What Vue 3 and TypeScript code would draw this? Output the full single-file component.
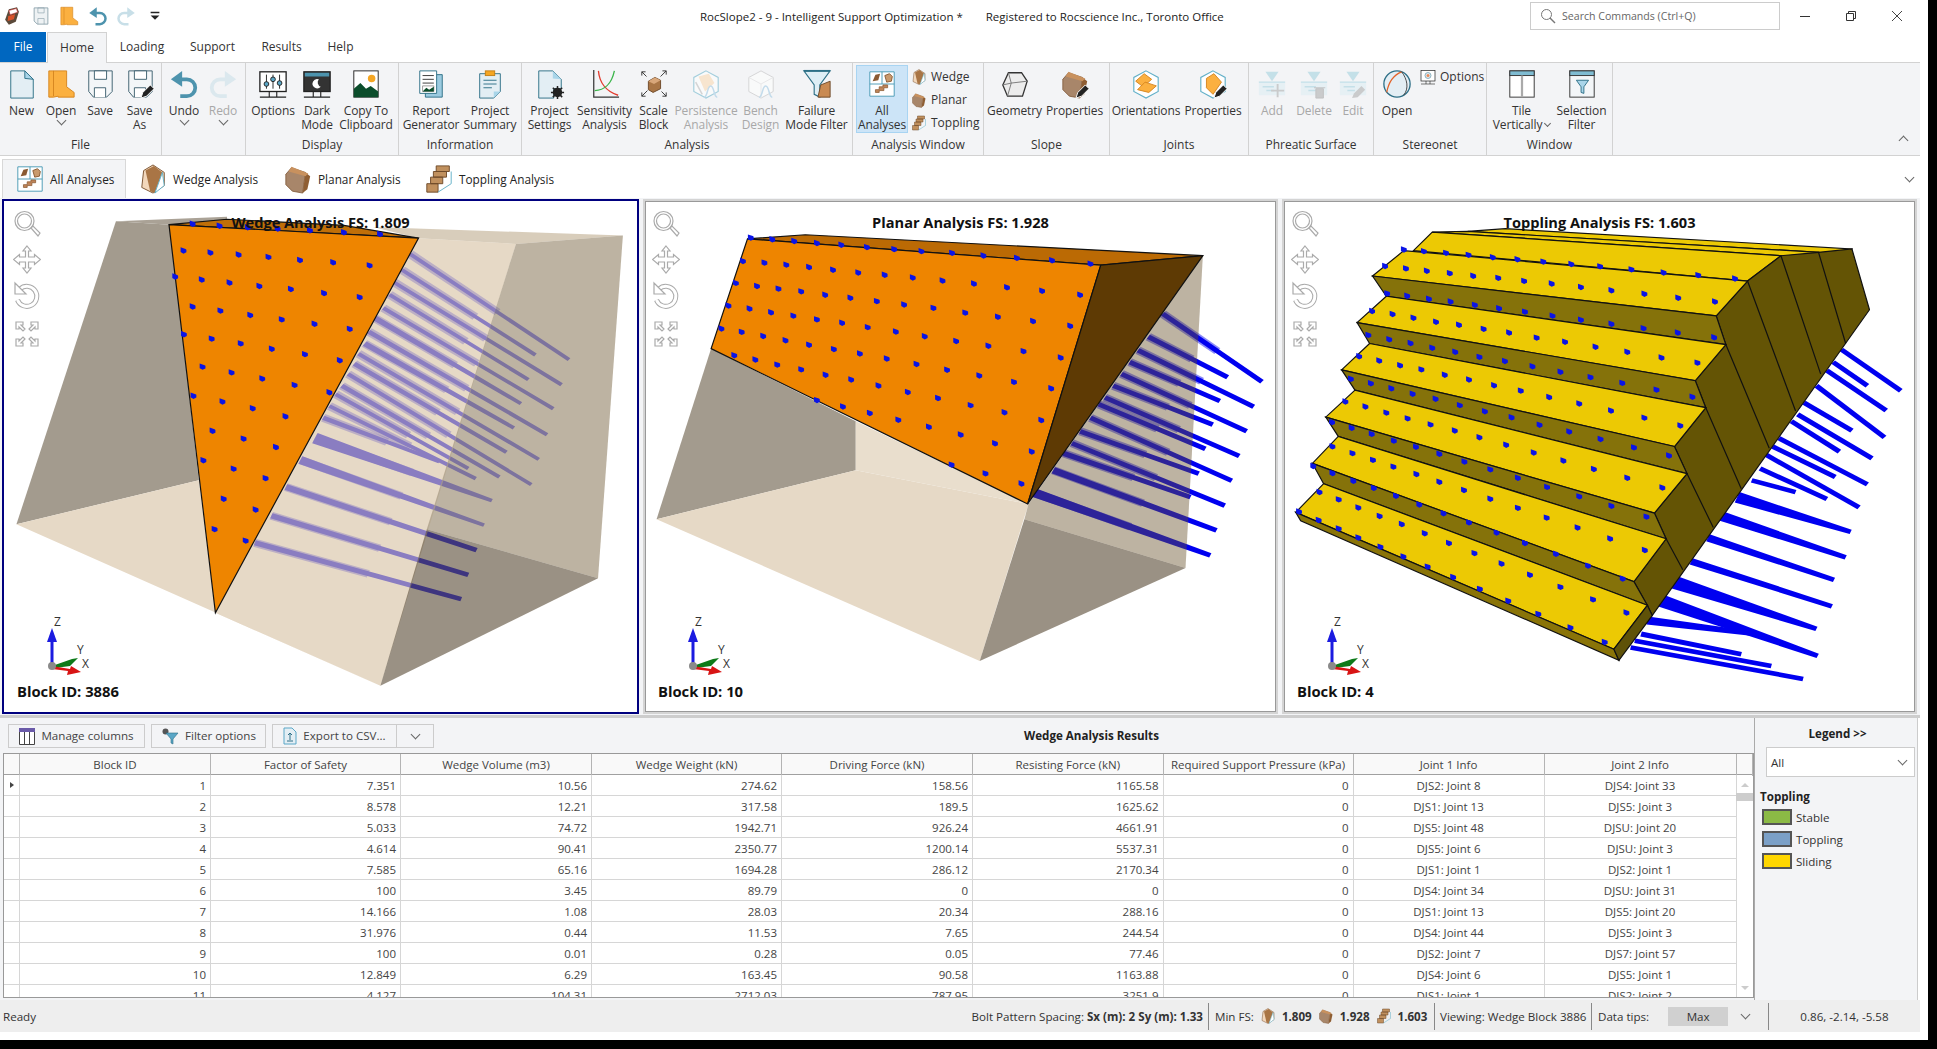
<script setup lang="ts">
// 3D views are drawn in the coordinates of the zoomed reference and stretched by the viewBox
type Face = { pts: string; fill: string; op?: number; edge?: boolean }
type Scene = {
  title: string
  block: string
  active?: boolean
  viewBox: string
  back: Face[]
  bolts: number[][]
  groutOp?: number
  front: Face[]
  lines?: string
  heads: string[]
}

function taper([x1, y1, x2, y2, w1, w2]: number[]) {
  const len = Math.hypot(x2 - x1, y2 - y1)
  const nx = -(y2 - y1) / len
  const ny = (x2 - x1) / len
  const end = w2 * 1.5
  const start = Math.max(w1 * 1.1, end)
  return [
    [x1 + (nx * start) / 2, y1 + (ny * start) / 2],
    [x2 + (nx * end) / 2, y2 + (ny * end) / 2],
    [x2 - (nx * end) / 2, y2 - (ny * end) / 2],
    [x1 - (nx * start) / 2, y1 - (ny * start) / 2],
  ]
    .map((p) => p.map((v) => v.toFixed(1)).join(","))
    .join(" ")
}

// wider grouted part along the first half of a bolt
function grout([x1, y1, x2, y2]: number[]) {
  return taper([x1, y1, x1 + (x2 - x1) * 0.55, y1 + (y2 - y1) * 0.55, 22, 15])
}

function headPath(rows: string[]) {
  return rows
    .join(" ")
    .trim()
    .split(/\s+/)
    .map((p) => {
      const [x, y] = p.split(",").map(Number)
      return `M${x - 7} ${y - 10}l12 5 2 2 0 8-7 4-7-5z`
    })
    .join("")
}

const wedge: Scene = {
  title: "Wedge Analysis FS: 1.809",
  block: "Block ID: 3886",
  active: true,
  viewBox: "10 18 1527 1513",
  groutOp: 0.45,
  back: [
    { pts: "280,78 548,65 548,85 410,88", fill: "#aaa296" },
    { pts: "280,78 410,88 480,845 40,975", fill: "#a39b8e" },
    { pts: "40,975 480,845 520,1237 918,1453", fill: "#e6d9c6" },
  ],
  bolts: [
    [990, 175, 1373, 488, 8, 7], [970, 222, 1292, 474, 8, 7], [950, 258, 1355, 562, 8, 7],
    [940, 295, 1275, 547, 9, 7], [925, 335, 1335, 633, 10, 7], [905, 365, 1257, 618, 14, 7],
    [890, 405, 1320, 710, 12, 7], [880, 440, 1240, 690, 14, 7], [865, 470, 1300, 783, 10, 7],
    [855, 500, 1222, 762, 12, 7], [840, 530, 1282, 858, 10, 7], [825, 565, 1205, 835, 12, 7],
    [810, 590, 1130, 810, 10, 7], [795, 625, 1148, 840, 10, 7], [780, 660, 1060, 790, 12, 7],
    [760, 720, 1187, 905, 30, 7], [725, 785, 1168, 978, 22, 7], [690, 865, 1150, 1052, 16, 9],
    [655, 950, 1130, 1125, 14, 9], [615, 1030, 1113, 1197, 14, 9],
  ],
  front: [
    { pts: "900,95 1503,120 1245,145 1010,128", fill: "rgb(194,177,148)", op: 0.64 },
    { pts: "1010,128 1245,145 918,1453 520,1237", fill: "rgb(216,196,166)", op: 0.64 },
    { pts: "1245,145 1503,120 1443,1135 1030,990", fill: "rgb(167,153,131)", op: 0.75 },
    { pts: "1030,990 1443,1135 918,1453", fill: "rgb(97,83,62)", op: 0.64 },
    { pts: "408,88 548,72 830,90 1010,128", fill: "#c06f08", edge: true },
    { pts: "408,88 1010,128 520,1237", fill: "#ee8500", edge: true },
  ],
  heads: [
    "465,86 530,92 598,96 670,100 748,105 830,111 917,116",
    "443,165 508,171 576,177 648,184 724,193 804,200 892,209",
    "423,242 487,251 554,260 626,270 702,279 782,291 868,303",
    "465,331 532,343 604,356 680,369 759,382 844,397",
    "444,413 511,426 581,440 656,456 736,472 820,490",
    "489,509 559,526 633,544 711,563 795,585",
    "467,595 537,612 610,632 689,656",
    "513,699 588,722 666,747",
    "491,786 564,811 641,839",
    "540,900 617,932",
    "518,990 593,1024",
  ],
}

const planar: Scene = {
  title: "Planar Analysis FS: 1.928",
  block: "Block ID: 10",
  viewBox: "12 18 1527 1513",
  groutOp: 0.45,
  back: [
    { pts: "172,455 522,670 522,815 40,960", fill: "#a39b8e" },
    { pts: "40,960 522,815 940,915 822,1380", fill: "#e6d9c6" },
    { pts: "522,670 940,915 522,815", fill: "#e9decd" },
    { pts: "930,960 1320,1105 822,1380", fill: "#9a9184" },
  ],
  bolts: [
    [1265, 352, 1505, 553, 9, 9], [1230, 420, 1422, 540, 9, 9], [1205, 460, 1485, 627, 9, 9],
    [1185, 495, 1403, 610, 9, 9], [1165, 530, 1468, 700, 10, 9], [1145, 565, 1386, 680, 10, 9],
    [1125, 600, 1450, 773, 10, 9], [1110, 620, 1368, 752, 10, 9], [1090, 660, 1432, 846, 10, 9],
    [1065, 700, 1352, 825, 12, 9], [1045, 735, 1415, 920, 12, 9], [1025, 765, 1332, 895, 14, 9],
    [1000, 815, 1395, 993, 18, 9], [950, 880, 1380, 1067, 24, 9],
  ],
  front: [
    { pts: "940,915 1362,180 1320,1105 930,960", fill: "rgb(103,80,41)", op: 0.435 },
    { pts: "260,130 400,118 1362,180 1115,208", fill: "#bb6a04", edge: true },
    { pts: "260,130 1115,208 938,915 172,455", fill: "#ee8500", edge: true },
    { pts: "1115,208 1362,180 938,915", fill: "#5e3a04", edge: true },
  ],
  heads: [
    "268,127 320,132 373,137 428,143 487,148 549,155 615,161 681,167 755,172 831,180 912,187 997,194 1090,204",
    "249,196 301,201 354,207 409,214 467,222 528,230 592,237 660,245 732,254 808,263 888,274 973,284 1065,296",
    "232,261 283,270 335,278 390,286 448,296 509,305 573,315 639,325 710,335 787,349 866,361 951,374 1041,388",
    "214,328 265,337 317,348 371,358 428,369 489,379 551,392 619,405 689,419 765,433 843,447 928,463 1018,482",
    "197,396 246,406 298,418 352,431 409,444 469,457 532,470 597,485 669,501 743,518 821,535 905,554 995,573",
    "228,475 279,488 332,503 390,517 449,533 511,547 577,565 648,584 721,602 800,623 882,644 971,667",
    "428,608 491,627 556,646 625,666 699,687 776,710 859,736 948,760",
    "754,799 836,825 923,855",
  ],
}

const topY = "#ecc904"
const riser = "#85720a"
const toppling: Scene = {
  title: "Toppling Analysis FS: 1.603",
  block: "Block ID: 4",
  viewBox: "10 18 1511 1513",
  back: [],
  bolts: [
    [1345, 458, 1487, 580, 9, 9], [1325, 495, 1407, 565, 9, 9], [1310, 520, 1452, 638, 9, 9],
    [1285, 565, 1448, 718, 10, 9], [1255, 615, 1370, 698, 10, 9], [1240, 650, 1418, 780, 12, 9],
    [1225, 670, 1340, 760, 10, 9], [1195, 720, 1407, 857, 10, 9], [1180, 745, 1330, 835, 10, 9],
    [1165, 770, 1387, 925, 12, 9], [1150, 810, 1310, 900, 10, 9], [1130, 845, 1235, 880, 10, 9],
    [1095, 895, 1367, 998, 30, 9], [1055, 950, 1355, 1073, 26, 9], [1025, 1015, 1327, 1140, 20, 9],
    [985, 1085, 1322, 1218, 18, 9], [940, 1145, 1285, 1285, 36, 9], [910, 1200, 1288, 1365, 34, 9],
    [880, 1260, 1140, 1300, 22, 9], [865, 1300, 1105, 1360, 14, 9], [850, 1320, 1177, 1395, 10, 9],
    [840, 1340, 1253, 1433, 10, 9],
  ],
  front: [
    { pts: "540,100 1370,160 1305,250 1290,170 450,108", fill: topY, edge: true },
    { pts: "450,108 1290,170 1225,265 1200,180 365,110", fill: topY, edge: true },
    { pts: "320,165 365,110 1200,180 1120,255", fill: topY, edge: true },
    {
      pts: "1045,358 1120,255 1200,180 1290,170 1370,160 1412,340 892,1245 880,1215 848,1145 925,1018 897,942 975,825 945,745 1020,630 995,550 1068,443",
      fill: "#645405",
      edge: true,
    },
    { pts: "222,240 297,165 1120,255 1045,358", fill: topY, edge: true },
    { pts: "222,240 1045,358 1068,443 255,300", fill: riser, edge: true },
    { pts: "255,300 185,378 995,550 1068,443", fill: topY, edge: true },
    { pts: "185,378 995,550 1020,630 215,440", fill: riser, edge: true },
    { pts: "215,440 148,518 945,745 1020,630", fill: topY, edge: true },
    { pts: "148,518 945,745 975,825 180,578", fill: riser, edge: true },
    { pts: "180,578 110,658 897,942 975,825", fill: topY, edge: true },
    { pts: "110,658 897,942 925,1018 140,715", fill: riser, edge: true },
    { pts: "140,715 78,795 848,1145 925,1018", fill: topY, edge: true },
    { pts: "78,795 848,1145 880,1215 105,855", fill: riser, edge: true },
    { pts: "105,855 38,940 800,1345 880,1215", fill: topY, edge: true },
    { pts: "38,940 800,1345 812,1378 50,965", fill: "#8a7408", edge: true },
    { pts: "800,1345 880,1215 892,1245 812,1378", fill: "#5f5208", edge: true },
  ],
  lines:
    "M1200 180L1295 530M1290 170L1355 440M1120 255L1235 640M1068 443L1172 750M1020 630L1105 870M975 825L1038 985M925 1018L965 1110",
  heads: [
    "297,162 345,167 398,172 452,178 510,185 569,191 631,198 698,205 767,212 842,221 919,230 1002,238 1090,248",
    "252,211 302,218 352,225 407,232 463,240 523,246 585,255 651,263 721,273 794,283 873,293 954,305 1042,316",
    "257,292 305,299 357,308 409,316 467,326 525,336 587,346 653,358 721,370 794,382 871,395 953,408 1040,422",
    "221,344 270,353 320,364 374,376 429,385 488,397 549,408 615,423 683,435 756,450 832,465 914,482 1000,497",
    "212,415 262,428 313,439 365,453 420,465 478,480 539,492 605,508 672,524 744,540 820,557 902,577 988,598",
    "190,478 238,491 288,505 339,517 395,533 453,547 513,564 577,580 645,599 717,618 793,639 873,660 959,683",
    "170,545 218,558 267,573 318,589 373,604 431,623 491,641 555,659 622,681 693,701 768,723 848,748 932,772",
    "157,612 205,627 255,645 306,662 361,680 419,698 478,718 542,740 608,763 679,787 752,812 832,838 916,867",
    "125,673 172,690 220,708 273,728 326,746 382,767 442,790 504,813 570,838 640,865 717,893 794,921 878,953",
    "126,745 174,765 223,785 272,805 327,827 382,850 441,874 504,900 570,927 639,956 713,985 791,1018 874,1052",
    "80,803 126,824 176,847 225,868 278,891 334,917 392,943 453,970 519,1000 587,1031 661,1063 738,1098 821,1136",
    "95,880 141,902 188,926 239,951 292,975 347,1002 405,1031 466,1061 531,1092 599,1125 672,1161 750,1198 830,1237",
    "46,938 93,963 141,988 188,1015 241,1042 296,1071 354,1101 415,1132 479,1167 547,1202 619,1241 696,1281 778,1324",
  ],
}

const scenes = [wedge, planar, toppling]

const pencil = `<path d="M17 31l2-6 8-8 4 4-8 8z" fill="#222" stroke="#fff"/>`
const floppy = (extra = "") =>
  `<path d="M4 2h25v22l-6 6H9l-5-6z" fill="#f3f6f8" stroke="#3c5f6e"/><path d="M10 2h13v9H10zM10 30V20h12v10" fill="#fff" stroke="#3c5f6e"/>${extra}`
const monitor = (inner: string, fill = "#fff") =>
  `<rect x="2" y="3" width="28" height="21" fill="${fill}" stroke="#222" stroke-width="1.4"/>${inner}<path d="M12 24v6M20 24v6M2 30h28" stroke="#222" stroke-width="1.2"/>`
const brownBlock = `<path d="M3 11l6-7 15 5-3 22-11-2-7-7z" fill="#a8866a" stroke="#7a5230" stroke-width=".8"/><path d="M24 9l5 4-3 14-5 4z" fill="#8f5e33"/><path d="M9 3l18 7-3 3L6 8z" fill="#c8915e"/>`
const hex = `<path d="M16 2l13 7v15l-13 7-13-7V9z" fill="#fff" stroke="#62b0c8" stroke-width="1.2"/>`
const phreatic = (extra: string) =>
  `<path d="M9 3h14l-7 10z" fill="#9fd0de"/><path d="M2 14h28v14H2z" fill="#dcedf4"/><path d="M2 14h28M6 19h12M10 23h8" stroke="#9fd0de" stroke-width="1.5"/>${extra}`
const miniBlocks = `<path d="M3 3h26v26H3zM3 16h26M16 3v13" fill="#fff" stroke="#4a9ab5"/><path d="M6 13l3-7 5-1-2 7z" fill="#8a5a32"/><path d="M19 7l5-2 3 3-1 5-5 1z" fill="#c99a6d" stroke="#8a5a32"/><path d="M9 25v-3h4v-3h4v-2h5v3h-4v3h-5v2z" fill="#c0855a" stroke="#8a5a32" stroke-width=".8"/>`

const icons: Record<string, string> = {
  new: `<path d="M4 2h15l9 9v20H4z" fill="#e3eef4" stroke="#2d6f86"/><path d="M19 2l9 9-9-1z" fill="#a9d5e9" stroke="#2d6f86"/>`,
  open: `<path d="M3 2h19v17l8 6v5H13v-1l-5 1H3z" fill="#fbb040" stroke="#d5851f"/><path d="M8 2v27" stroke="#d5851f"/>`,
  save: floppy(),
  saveas: floppy(pencil),
  undo: `<path d="M10 11h9a9 9 0 0 1 0 18h-7" fill="none" stroke="#4d93ad" stroke-width="4"/><path d="M2 11l12-9v17z" fill="#4d93ad"/>`,
  redo: `<path d="M22 11h-9a9 9 0 0 0 0 18h7" fill="none" stroke="#c8dfe8" stroke-width="4"/><path d="M30 11L18 2v17z" fill="#c8dfe8"/>`,
  options: monitor(
    `<path d="M9 6v15M16 6v15M23 6v15" stroke="#222"/><circle cx="9" cy="16" r="2.5" fill="#5aa7c7" stroke="#222"/><circle cx="16" cy="11" r="2.5" fill="#5aa7c7" stroke="#222"/><circle cx="23" cy="15" r="2.5" fill="#5aa7c7" stroke="#222"/>`,
  ),
  dark: monitor(
    `<rect x="3" y="4" width="26" height="4" fill="#4d93ad"/><path d="M18 11a5 5 0 1 0 2 8 5 5 0 0 1-2-8z" fill="#fff"/>`,
    "#333",
  ),
  copy: `<rect x="3" y="2" width="26" height="28" fill="#fff" stroke="#222"/><circle cx="22" cy="10" r="4" fill="#f5a623"/><path d="M3 30V21l7-6 6 6 5-3 8 6v6z" fill="#0b4d2b"/>`,
  report: `<path d="M10 6h18v24H10z" fill="#9ccbe0" stroke="#2d6f86"/><path d="M4 2h18v24H4z" fill="#fff" stroke="#2d6f86"/><path d="M7 7h12M7 11h12M7 15h12" stroke="#333"/><path d="M7 18h12v6H7z" fill="#fff" stroke="#999"/><path d="M7 24l4-4 3 2 5-3v5z" fill="#0b4d2b"/>`,
  summary: `<path d="M5 5h22v19l-7 7H5z" fill="#e3eef4" stroke="#2d6f86"/><path d="M20 31v-7h7z" fill="#a9d5e9"/><rect x="11" y="2" width="10" height="5" fill="#f5a623" stroke="#c47f18"/><path d="M9 12h14M9 16h14M9 20h9" stroke="#2d6f86"/>`,
  settings: `<path d="M4 2h15l9 9v10H20v10H4z" fill="#e3eef4" stroke="#2d6f86"/><path d="M19 2l9 9-9-1z" fill="#a9d5e9"/><circle cx="24" cy="25" r="5" fill="#222"/><circle cx="24" cy="25" r="1.8" fill="#fff"/><path d="M24 18v14M17 25h14M19 20l10 10M29 20l-10 10" stroke="#222" stroke-width="1.6"/>`,
  sensitivity: `<path d="M4 1v29h27" fill="none" stroke="#333" stroke-width="1.3"/><path d="M9 2c1 12 8 22 21 26" fill="none" stroke="#e23b2e" stroke-width="1.4"/><path d="M5 23c10 0 18-7 21-21" fill="none" stroke="#3ab54a" stroke-width="1.4"/>`,
  scale: `<path d="M10 13l7-4 6 3v9l-8 4-5-3z" fill="#a97545" stroke="#6e4a2a"/><path d="M10 13l7-4 6 3-7 4z" fill="#d9a77a"/><path d="M3 3l5 5M3 3h4M3 3v4M29 29l-5-5M29 29h-4M29 29v-4M23 8l6-6M29 2h-4M29 2v4M3 29l6-6M3 29h4M3 29v-4" stroke="#333" fill="none"/>`,
  persist: `${hex}<path d="M8 8l11-3 6 10-10 9z" fill="#fbd9b0"/><path d="M14 30c4 0 3-12 7-12s3 12 7 12" fill="none" stroke="#9cc8e3" stroke-width="1.6"/><path d="M5 14l7 13" stroke="#bbb" stroke-width="1.6"/>`,
  bench: `<path d="M16 2l13 7v15l-13 7-13-7V9z" fill="#fff" stroke="#bbb"/><path d="M3 9l13 7 13-7M16 16v15" stroke="#ddd" fill="none"/><path d="M14 30c4 0 3-12 7-12s3 12 7 12" fill="none" stroke="#9cc8e3" stroke-width="1.6"/>`,
  filter: `<path d="M2 2h28l-11 15v13l-6-3V17z" fill="#deeef5" stroke="#2d6f86" stroke-width="1.2"/><path d="M2 2h28" stroke="#2d6f86" stroke-width="2"/><path d="M17 30l3-13 10-4v17z" fill="#c98a52" stroke="#6e4a2a"/>`,
  all: miniBlocks,
  wedge: `<path d="M16 1l12 8v14l-12 8-12-6 2-18z" fill="#f2d7bb" stroke="#7a5230"/><path d="M8 7l9-5 9 7-8 22-5-2z" fill="#a97545"/><path d="M18 31l8-22 2 14z" fill="#fff" stroke="#62b0c8"/>`,
  planar: brownBlock,
  topple: `<path d="M3 21h12v9H3zM7 14h13v7H7zM10 8h14v6H10zM13 2h14v6H13z" fill="#c0905e" stroke="#6e4a2a"/><path d="M15 30l14-9V8" fill="none" stroke="#62b0c8"/>`,
  geometry: `<path d="M9 4h14l6 9-5 16H8L3 17z" fill="#ececec" stroke="#333" stroke-width="1.4"/><path d="M9 4l3 11 17-2M12 15l-4 14M12 15L3 17" stroke="#777" fill="none"/>`,
  props: `${brownBlock}${pencil}`,
  orient: `${hex}<path d="M5 13l9-8 8 6-9 8z" fill="#fbb040" stroke="#d5851f"/><path d="M7 22l8-8 12 4-8 7z" fill="#fbb040" stroke="#d5851f"/>`,
  jprops: `${hex}<path d="M9 10l8-5 8 9-9 13-7-7z" fill="#fbb040" stroke="#d5851f"/>${pencil}`,
  add: phreatic(`<path d="M22 16v14M15 23h14" stroke="#aaa" stroke-width="2"/>`),
  del: phreatic(`<path d="M16 20h12M18 21h8v10h-8z" fill="#aaa" stroke="#999"/>`),
  edit: phreatic(`<path d="M15 31l2-5 8-8 4 4-8 8z" fill="#aaa"/>`),
  stereo: `<circle cx="16" cy="16" r="14" fill="#e3eef4" stroke="#2d6f86" stroke-width="1.4"/><path d="M5 25C7 14 13 6 21 3" fill="none" stroke="#e2632a" stroke-width="1.3"/><path d="M21 3c6 8 8 18 2 25" fill="none" stroke="#444"/>`,
  optsmall: monitor(`<circle cx="16" cy="13" r="6" fill="#e3eef4" stroke="#2d6f86"/><circle cx="16" cy="13" r="3" fill="#e98b5a"/>`),
  tile: `<rect x="3" y="2" width="26" height="28" fill="#fff" stroke="#333"/><rect x="3" y="2" width="26" height="5" fill="#7fbcd2" stroke="#333"/><path d="M16 7v23" stroke="#aaa" stroke-width="2.4"/>`,
  selfilter: `<rect x="3" y="2" width="26" height="28" fill="#f3f6f8" stroke="#333"/><rect x="3" y="2" width="26" height="5" fill="#7fbcd2" stroke="#333"/><path d="M10 12h13l-5 7v7l-3-1v-6z" fill="#a9d5e9" stroke="#2d6f86"/>`,
  appicon: `<path d="M5 22l6-17 13-3 3 7-5 16-11 5z" fill="#5a4a3a"/><path d="M11 7l12-3 2 6-12 4z" fill="#fff" stroke="#c33"/><path d="M10 16l11-3-2 8-10 3z" fill="#d8532b"/>`,
  qsave: `<path d="M5 3h22v26H10l-5-5z" fill="#eef2f4" stroke="#8aa0aa" stroke-width="1.4"/><path d="M11 3h10v8H11zM11 29v-9h10v9" fill="none" stroke="#8aa0aa"/>`,
}

type Small = { label: string; icon: string }
type Item = {
  w: number
  label?: string
  icon?: string
  chev?: boolean
  inlineChev?: boolean
  off?: boolean
  on?: boolean
  small?: Small[]
}
type Group = { name: string; w: number; items: Item[] }

const groups: Group[] = [
  {
    name: "File",
    w: 162,
    items: [
      { w: 40, label: "New", icon: "new" },
      { w: 39, label: "Open", icon: "open", chev: true },
      { w: 39, label: "Save", icon: "save" },
      { w: 40, label: "Save\nAs", icon: "saveas" },
    ],
  },
  {
    name: "",
    w: 84,
    items: [
      { w: 39, label: "Undo", icon: "undo", chev: true },
      { w: 39, label: "Redo", icon: "redo", chev: true, off: true },
    ],
  },
  {
    name: "Display",
    w: 153,
    items: [
      { w: 46, label: "Options", icon: "options" },
      { w: 42, label: "Dark\nMode", icon: "dark" },
      { w: 56, label: "Copy To\nClipboard", icon: "copy" },
    ],
  },
  {
    name: "Information",
    w: 123,
    items: [
      { w: 60, label: "Report\nGenerator", icon: "report" },
      { w: 58, label: "Project\nSummary", icon: "summary" },
    ],
  },
  {
    name: "Analysis",
    w: 331,
    items: [
      { w: 52, label: "Project\nSettings", icon: "settings" },
      { w: 58, label: "Sensitivity\nAnalysis", icon: "sensitivity" },
      { w: 40, label: "Scale\nBlock", icon: "scale" },
      { w: 65, label: "Persistence\nAnalysis", icon: "persist", off: true },
      { w: 44, label: "Bench\nDesign", icon: "bench", off: true },
      { w: 68, label: "Failure\nMode Filter", icon: "filter" },
    ],
  },
  {
    name: "Analysis Window",
    w: 131,
    items: [
      { w: 52, label: "All\nAnalyses", icon: "all", on: true },
      {
        w: 72,
        small: [
          { label: "Wedge", icon: "wedge" },
          { label: "Planar", icon: "planar" },
          { label: "Toppling", icon: "topple" },
        ],
      },
    ],
  },
  {
    name: "Slope",
    w: 126,
    items: [
      { w: 56, label: "Geometry", icon: "geometry" },
      { w: 64, label: "Properties", icon: "props" },
    ],
  },
  {
    name: "Joints",
    w: 139,
    items: [
      { w: 68, label: "Orientations", icon: "orient" },
      { w: 66, label: "Properties", icon: "jprops" },
    ],
  },
  {
    name: "Phreatic Surface",
    w: 125,
    items: [
      { w: 36, label: "Add", icon: "add", off: true },
      { w: 48, label: "Delete", icon: "del", off: true },
      { w: 30, label: "Edit", icon: "edit", off: true },
    ],
  },
  {
    name: "Stereonet",
    w: 113,
    items: [
      { w: 40, label: "Open", icon: "stereo" },
      { w: 66, small: [{ label: "Options", icon: "optsmall" }] },
    ],
  },
  {
    name: "Window",
    w: 126,
    items: [
      { w: 64, label: "Tile\nVertically", icon: "tile", inlineChev: true },
      { w: 56, label: "Selection\nFilter", icon: "selfilter" },
    ],
  },
]

const menu = ["Home", "Loading", "Support", "Results", "Help"]

const analysisTabs = [
  { label: "All Analyses", icon: "all", w: 124, on: true },
  { label: "Wedge Analysis", icon: "wedge", w: 145 },
  { label: "Planar Analysis", icon: "planar", w: 141 },
  { label: "Toppling Analysis", icon: "topple", w: 150 },
]

const columns = [
  "Block ID",
  "Factor of Safety",
  "Wedge Volume (m3)",
  "Wedge Weight (kN)",
  "Driving Force (kN)",
  "Resisting Force (kN)",
  "Required Support Pressure (kPa)",
  "Joint 1 Info",
  "Joint 2 Info",
]

const rows = [
  ["1", "7.351", "10.56", "274.62", "158.56", "1165.58", "0", "DJS2: Joint 8", "DJS4: Joint 33"],
  ["2", "8.578", "12.21", "317.58", "189.5", "1625.62", "0", "DJS1: Joint 13", "DJS5: Joint 3"],
  ["3", "5.033", "74.72", "1942.71", "926.24", "4661.91", "0", "DJS5: Joint 48", "DJSU: Joint 20"],
  ["4", "4.614", "90.41", "2350.77", "1200.14", "5537.31", "0", "DJS5: Joint 6", "DJSU: Joint 3"],
  ["5", "7.585", "65.16", "1694.28", "286.12", "2170.34", "0", "DJS1: Joint 1", "DJS2: Joint 1"],
  ["6", "100", "3.45", "89.79", "0", "0", "0", "DJS4: Joint 34", "DJSU: Joint 31"],
  ["7", "14.166", "1.08", "28.03", "20.34", "288.16", "0", "DJS1: Joint 13", "DJS5: Joint 20"],
  ["8", "31.976", "0.44", "11.53", "7.65", "244.54", "0", "DJS4: Joint 44", "DJS5: Joint 3"],
  ["9", "100", "0.01", "0.28", "0.05", "77.46", "0", "DJS2: Joint 7", "DJS7: Joint 57"],
  ["10", "12.849", "6.29", "163.45", "90.58", "1163.88", "0", "DJS4: Joint 6", "DJS5: Joint 1"],
  ["11", "4.127", "104.31", "2712.03", "787.95", "3251.9", "0", "DJS1: Joint 1", "DJS2: Joint 2"],
]

const legend = [
  { label: "Stable", color: "#8bba45" },
  { label: "Toppling", color: "#7ba0c7" },
  { label: "Sliding", color: "#ffd700" },
]
</script>

<template>
  <div class="window">
    <header class="titlebar">
      <div class="quick">
        <svg class="qic" viewBox="0 0 32 32" v-html="icons.appicon" />
        <svg class="qic" viewBox="0 0 32 32" v-html="icons.qsave" />
        <svg class="qic" viewBox="0 0 32 32" v-html="icons.open" />
        <svg class="qic" viewBox="0 0 32 32" v-html="icons.undo" />
        <svg class="qic" viewBox="0 0 32 32" v-html="icons.redo" />
        <svg class="qic" viewBox="0 0 32 32"><path d="M9 9h14v2.500H9zM9 15h14l-7 7z" fill="#222" /></svg>
      </div>
      <div class="doc-title">
        <span>RocSlope2 - 9 - Intelligent Support Optimization *</span>
        <span>Registered to Rocscience Inc., Toronto Office</span>
      </div>
      <div class="search">
        <svg viewBox="0 0 16 16" width="16" height="16">
          <circle cx="6.500" cy="6.500" r="5" fill="none" stroke="#777" />
          <path d="M10 10l5 5" stroke="#777" stroke-width="1.400" />
        </svg>
        <span>Search Commands (Ctrl+Q)</span>
      </div>
      <div class="winbtn">
        <svg viewBox="0 0 12 12" width="12" height="12"><path d="M1 6.500h10" stroke="#333" /></svg>
      </div>
      <div class="winbtn">
        <svg viewBox="0 0 12 12" width="12" height="12">
          <path d="M1.500 3.500h7v7h-7zM3.500 3.500v-2h7v7h-2" fill="none" stroke="#333" />
        </svg>
      </div>
      <div class="winbtn">
        <svg viewBox="0 0 12 12" width="12" height="12"><path d="M1 1l10 10M11 1L1 11" stroke="#444" /></svg>
      </div>
    </header>

    <nav class="menu">
      <span class="menu-file">File</span>
      <span v-for="m in menu" :key="m" class="menu-item" :class="'menu-' + m.toLowerCase()">{{ m }}</span>
    </nav>

    <section class="ribbon">
      <div v-for="g in groups" :key="g.name" class="group" :style="{ width: g.w + 'px' }">
        <div class="group-items">
          <template v-for="(it, i) in g.items" :key="i">
            <div v-if="it.small" class="small-col" :style="{ width: it.w + 'px' }">
              <div v-for="s in it.small" :key="s.label" class="small-btn">
                <svg class="sic" viewBox="0 0 32 32" v-html="icons[s.icon]" />
                <span>{{ s.label }}</span>
              </div>
            </div>
            <div v-else class="btn" :class="{ off: it.off, on: it.on }" :style="{ width: it.w + 'px' }">
              <svg class="ic" viewBox="0 0 32 32" v-html="icons[it.icon!]" />
              <span class="btn-label">{{ it.label }}<i v-if="it.inlineChev" class="chev inline" /></span>
              <i v-if="it.chev" class="chev" />
            </div>
          </template>
        </div>
        <div class="group-name">{{ g.name }}</div>
      </div>
      <div class="ribbon-rest"><i class="chev up" /></div>
    </section>

    <div class="view-tabs">
      <div
        v-for="t in analysisTabs"
        :key="t.label"
        class="view-tab"
        :class="{ on: t.on }"
        :style="{ width: t.w + 'px' }"
      >
        <svg class="tab-ic" viewBox="0 0 32 32" v-html="icons[t.icon]" />
        <span>{{ t.label }}</span>
      </div>
      <i class="chev tabs-chev" />
    </div>

    <div class="views">
      <div v-for="s in scenes" :key="s.title" class="view" :class="{ active: s.active }">
        <svg class="scene" :viewBox="s.viewBox" preserveAspectRatio="none">
          <polygon v-for="f in s.back" :key="f.pts" :points="f.pts" :fill="f.fill" />
          <template v-if="s.groutOp">
            <polygon
              v-for="b in s.bolts"
              :key="'g' + b.join()"
              :points="grout(b)"
              fill="#0000f0"
              :fill-opacity="s.groutOp"
            />
          </template>
          <polygon v-for="b in s.bolts" :key="b.join()" :points="taper(b)" fill="#0000f0" />
          <polygon
            v-for="f in s.front"
            :key="f.pts"
            :points="f.pts"
            :fill="f.fill"
            :fill-opacity="f.op ?? 1"
            :class="{ edge: f.edge }"
          />
          <path v-if="s.lines" :d="s.lines" class="edge" fill="none" />
          <path :d="headPath(s.heads)" fill="#0a14e6" />
        </svg>
        <div class="view-title">{{ s.title }}</div>
        <svg class="nav" viewBox="0 0 28 137" width="28" height="137">
          <g fill="#fff" stroke="#aaa" stroke-width="1.200">
            <circle cx="11.500" cy="11" r="9.500" />
            <circle cx="11.500" cy="11" r="7" />
            <path d="M18 18l2-2 7 7-2 3z" />
            <path
              d="M14 36l4 5h-2.500v6h6v-2.500l6 5-6 5V52h-6v6H18l-4 5-4-5h2.500v-6h-6v2.500l-6-5 6-5V47h6v-6H10z"
            />
            <path d="M7 79A10 10 0 1 1 4.500 90" fill="none" stroke-width="5" />
            <path d="M7 79A10 10 0 1 1 4.500 90" fill="none" stroke="#fff" stroke-width="3" />
            <path d="M2 73v11h11z" />
            <path d="M3 112h7v3h-2l4 4-2 2-4-4v2H3z" />
            <path d="M25 112h-7v3h2l-4 4 2 2 4-4v2h3z" />
            <path d="M3 136h7v-3H8l4-4-2-2-4 4v-2H3z" />
            <path d="M25 136h-7v-3h2l-4-4 2-2 4 4v-2h3z" />
          </g>
        </svg>
        <svg class="axes" viewBox="0 0 70 70" width="70" height="70">
          <path d="M18 55V26" stroke="#1b1be0" stroke-width="3" />
          <path d="M18 17l-5 14h10z" fill="#1b1be0" />
          <path d="M18 55l20-7 6-1-8 8-15 2z" fill="#0d7a18" />
          <path d="M18 55l18 3 1-3 10 6-14 3 1-4-16-2z" fill="#d81414" />
          <circle cx="18" cy="55" r="4" fill="#8a8a8a" />
          <text x="20" y="15" class="axis-label">Z</text>
          <text x="43" y="43" class="axis-label">Y</text>
          <text x="48" y="57" class="axis-label">X</text>
        </svg>
        <div class="block-id">{{ s.block }}</div>
      </div>
    </div>

    <div class="splitter" />

    <section class="results">
      <div class="results-main">
        <div class="toolbar">
          <div class="tool">
            <svg viewBox="0 0 16 20" width="16" height="20">
              <path d="M.5 2.500h15v16H.5zM5.500 2.500v16M10.500 2.500v16" fill="#fff" stroke="#444" />
              <rect x="0" y="2" width="16" height="4" fill="#6a5aa8" />
            </svg>
            <span>Manage columns</span>
          </div>
          <div class="tool">
            <svg viewBox="0 0 18 18" width="18" height="18">
              <circle cx="4.500" cy="4.500" r="3" fill="#555" />
              <path d="M5 6h12l-5 6v5l-2-1v-4z" fill="#5aa7c7" stroke="#2d6f86" stroke-width=".6" />
            </svg>
            <span>Filter options</span>
          </div>
          <div class="tool tool-split">
            <svg viewBox="0 0 14 18" width="14" height="18">
              <path d="M1 1h8l4 4v12H1z" fill="#e3eef4" stroke="#5aa7c7" />
              <path d="M7 6v7M5 8l2-2 2 2M4 14h6" stroke="#2d6f86" fill="none" />
            </svg>
            <span>Export to CSV...</span>
          </div>
          <div class="tool tool-arrow"><i class="chev" /></div>
          <div class="results-title">Wedge Analysis Results</div>
        </div>
        <div class="table">
          <div class="thead">
            <div class="corner" />
            <div v-for="c in columns" :key="c" class="th">{{ c }}</div>
            <div class="th-rest" />
          </div>
          <div class="tbody">
            <div class="tlines">
              <div v-for="(r, ri) in rows" :key="ri" class="tr">
                <div class="row-head"><i v-if="ri === 0" class="row-mark" /></div>
                <div v-for="(v, ci) in r" :key="ci" class="td" :class="{ mid: ci > 6 }">{{ v }}</div>
              </div>
            </div>
            <div class="scroll">
              <i class="scroll-up" />
              <i class="scroll-thumb" />
              <i class="scroll-down" />
            </div>
          </div>
        </div>
      </div>
      <aside class="legend">
        <div class="legend-head">Legend &gt;&gt;</div>
        <div class="legend-select"><span>All</span><i class="chev" /></div>
        <div class="legend-title">Toppling</div>
        <div v-for="l in legend" :key="l.label" class="legend-row">
          <i class="swatch" :style="{ background: l.color }" />
          <span>{{ l.label }}</span>
        </div>
      </aside>
    </section>

    <footer class="status">
      <span class="ready">Ready</span>
      <span class="spacing">Bolt Pattern Spacing: <b>Sx (m): 2 Sy (m): 1.33</b></span>
      <div class="seg seg-fs">
        <span>Min FS:</span>
        <svg class="stat-ic" viewBox="0 0 32 32" v-html="icons.wedge" />
        <b>1.809</b>
        <svg class="stat-ic" viewBox="0 0 32 32" v-html="icons.planar" />
        <b>1.928</b>
        <svg class="stat-ic" viewBox="0 0 32 32" v-html="icons.topple" />
        <b>1.603</b>
      </div>
      <div class="seg seg-view">Viewing: Wedge Block 3886</div>
      <div class="seg seg-tips">
        <span>Data tips:</span>
        <span class="tips-box">Max</span>
        <i class="chev" />
      </div>
      <div class="seg seg-xyz">0.86, -2.14, -5.58</div>
    </footer>
  </div>
</template>

<style>
html,
body {
  margin: 0;
  background: #000;
}
</style>

<style scoped>
.window {
  width: 1928px;
  height: 1040px;
  background: #fff;
  font-family: "Open Sans", "Liberation Sans", sans-serif;
  font-size: 11.6px;
  color: #333;
  overflow: hidden;
}
.chev {
  display: inline-block;
  width: 6px;
  height: 6px;
  border-right: 1px solid #666;
  border-bottom: 1px solid #666;
  transform: rotate(45deg);
}

/* title bar */
.titlebar {
  display: flex;
  align-items: center;
  height: 32px;
  width: 1920px;
}
.quick {
  display: flex;
  gap: 8.5px;
  width: 698px;
  padding-left: 2px;
}
.qic {
  width: 20px;
  height: 20px;
}
.doc-title {
  display: flex;
  gap: 23px;
  width: 830px;
  color: #222;
  font-size: 11.5px;
  white-space: nowrap;
}
.search {
  display: flex;
  align-items: center;
  gap: 6px;
  box-sizing: border-box;
  width: 250px;
  height: 28px;
  padding-left: 9px;
  border: 1px solid #ccc;
  color: #666;
  font-size: 10.6px;
  margin-right: 2px;
}
.winbtn {
  display: flex;
  justify-content: center;
  width: 46px;
}

/* menu tabs */
.menu {
  display: flex;
  height: 30px;
  width: 1920px;
  line-height: 30px;
  text-align: center;
  font-size: 12px;
}
.menu-file {
  width: 46px;
  margin-right: 1px;
  background: #0067c0;
  color: #fff;
}
.menu-item {
  color: #333;
}
.menu-home {
  box-sizing: border-box;
  width: 60px;
  height: 31px;
  background: #f3f4f6;
  border: 1px solid #d2d2d2;
  border-bottom: 0;
  position: relative;
}
.menu-loading {
  width: 70px;
}
.menu-support {
  width: 71px;
}
.menu-results {
  width: 67px;
}
.menu-help {
  width: 51px;
}

/* ribbon */
.ribbon {
  display: flex;
  box-sizing: border-box;
  width: 1920px;
  height: 94px;
  background: #f3f4f6;
  border-top: 1px solid #d2d2d2;
  border-bottom: 1px solid #d2d2d2;
  font-size: 12px;
}
.group {
  display: flex;
  flex-direction: column;
  box-sizing: border-box;
  flex: none;
  border-right: 1px solid #d2d2d2;
}
.group-items {
  display: flex;
  justify-content: center;
  height: 72px;
  padding-top: 2px;
}
.group-name {
  text-align: center;
  line-height: 20px;
  color: #333;
}
.btn {
  display: flex;
  flex-direction: column;
  align-items: center;
  box-sizing: border-box;
  height: 68px;
  padding-top: 3px;
  flex: none;
  border: 1px solid transparent;
}
.btn.on {
  background: #cce4f7;
  border-color: #a8d4f2;
}
.btn.off {
  color: #a8a8a8;
}
.btn.off .ic {
  opacity: 0.55;
}
.ic {
  width: 30px;
  height: 30px;
  flex: none;
}
.btn-label {
  margin-top: 5px;
  line-height: 14px;
  text-align: center;
  white-space: pre;
  letter-spacing: -0.1px;
}
.btn .chev {
  margin-top: -1px;
}
.chev.inline {
  width: 4px;
  height: 4px;
  margin-left: 3px;
  margin-bottom: 3px;
}
.small-col {
  display: flex;
  flex-direction: column;
  flex: none;
  padding: 0 0 0 3px;
  box-sizing: border-box;
}
.small-btn {
  display: flex;
  align-items: center;
  gap: 4px;
  height: 23px;
}
.sic {
  width: 16px;
  height: 16px;
  flex: none;
}
.ribbon-rest {
  flex: 1;
  display: flex;
  justify-content: flex-end;
  align-items: flex-end;
  padding: 0 13px 11px 0;
}
.chev.up {
  transform: rotate(225deg);
}

/* analysis tabs */
.view-tabs {
  display: flex;
  align-items: flex-end;
  box-sizing: border-box;
  width: 1920px;
  height: 42px;
  padding-left: 2px;
  font-size: 11.8px;
}
.view-tab {
  display: flex;
  align-items: center;
  gap: 5px;
  box-sizing: border-box;
  height: 39px;
  padding-left: 12px;
  white-space: nowrap;
  color: #222;
}
.view-tab.on {
  background: #f3f4f6;
  border: 1px solid #d8d8d8;
  border-bottom: 0;
}
.tab-ic {
  width: 30px;
  height: 30px;
  flex: none;
}
.tabs-chev {
  margin: 0 7px 17px auto;
}

/* 3D views */
.views {
  display: flex;
  gap: 4px;
  box-sizing: border-box;
  width: 1920px;
  height: 517px;
  padding: 1px 3px 1px 2px;
  background: #f3f4f6;
}
.view {
  position: relative;
  flex: none;
  width: 635px;
  box-sizing: border-box;
  background: #fff;
  border: 2px solid #d4d4d4;
  box-shadow: inset 0 0 0 1px #999;
  overflow: hidden;
}
.view.active {
  width: 637px;
  border-color: #00007f;
  box-shadow: none;
}
.scene {
  display: block;
  width: 100%;
  height: 100%;
}
.edge {
  stroke: #111;
  stroke-width: 1.2;
  vector-effect: non-scaling-stroke;
}
.view-title {
  position: absolute;
  top: 11px;
  left: 0;
  right: 0;
  text-align: center;
  font-size: 14.6px;
  font-weight: 700;
  color: #111;
}
.nav {
  position: absolute;
  left: 7px;
  top: 9px;
}
.view.active .nav {
  left: 9px;
}
.axes {
  position: absolute;
  left: 30px;
  top: 410px;
}
.axis-label {
  font-family: "Open Sans", sans-serif;
  font-size: 12px;
  fill: #333;
}
.block-id {
  position: absolute;
  left: 13px;
  bottom: 11px;
  font-size: 14.8px;
  font-weight: 700;
  color: #111;
}

.splitter {
  width: 1920px;
  height: 3px;
  background: #cdcdcd;
}

/* results */
.results {
  display: flex;
  width: 1918px;
  height: 282px;
  background: #f3f4f6;
}
.results-main {
  width: 1754px;
  flex: none;
}
.toolbar {
  display: flex;
  align-items: center;
  box-sizing: border-box;
  height: 35px;
  padding: 0 5px 0 8px;
}
.tool {
  display: flex;
  align-items: center;
  justify-content: center;
  gap: 6px;
  box-sizing: border-box;
  height: 24px;
  width: 137px;
  margin-right: 6px;
  border: 1px solid #ccc;
  color: #444;
}
.tool:nth-child(2) {
  width: 115px;
}
.tool-split {
  width: 125px;
  margin-right: 0;
}
.tool-arrow {
  width: 37px;
  margin-right: 0;
  border-left: 0;
}
.tool-arrow .chev {
  margin-bottom: 3px;
}
.results-title {
  flex: 1;
  text-align: center;
  font-weight: 700;
  color: #222;
}
.table {
  box-sizing: border-box;
  width: 1751px;
  height: 245px;
  margin-left: 3px;
  border: 1px solid #999;
  background: #fff;
  overflow: hidden;
  color: #444;
  font-size: 11.5px;
}
.thead,
.tr {
  display: grid;
  grid-template-columns: 16px 191px 190px 191px 190px 191px 190.5px 190px 191px 192px;
}
.thead {
  grid-template-columns: 16px 191px 190px 191px 190px 191px 190.5px 190px 191px 192px 1fr;
  height: 21px;
  line-height: 22px;
  background: #f9f9f9;
  border-bottom: 1px solid #a0a0a0;
  text-align: center;
  box-sizing: border-box;
}
.corner,
.th,
.th-rest {
  border-right: 1px solid #b4b4b4;
}
.tbody {
  display: flex;
  height: 222px;
}
.tlines {
  flex: none;
  width: 1732px;
}
.tr {
  box-sizing: border-box;
  height: 21px;
  line-height: 22px;
  border-bottom: 1px solid #d6d6d6;
}
.row-head {
  position: relative;
  border-right: 1px solid #d6d6d6;
}
.row-mark {
  position: absolute;
  left: 6px;
  top: 7px;
  border-left: 4px solid #444;
  border-top: 3.500px solid transparent;
  border-bottom: 3.500px solid transparent;
}
.td {
  text-align: right;
  padding-right: 4px;
  border-right: 1px solid #d6d6d6;
  box-sizing: border-box;
}
.td.mid {
  text-align: center;
  padding-right: 0;
}
.scroll {
  display: flex;
  flex-direction: column;
  align-items: center;
  flex: 1;
  padding-top: 8px;
}
.scroll-up,
.scroll-down {
  width: 0;
  height: 0;
  border-left: 4px solid transparent;
  border-right: 4px solid transparent;
}
.scroll-up {
  border-bottom: 4px solid #ccc;
}
.scroll-down {
  margin-top: auto;
  margin-bottom: 7px;
  border-top: 4px solid #ccc;
}
.scroll-thumb {
  width: 100%;
  height: 8px;
  margin-top: 6px;
  background: #cdcdcd;
}

/* legend */
.legend {
  flex: 1;
  box-sizing: border-box;
  border-left: 1px solid #aaa;
  border-right: 1px solid #ccc;
  padding: 0 2px 0 5px;
}
.legend-head {
  height: 29px;
  line-height: 32px;
  text-align: center;
  font-weight: 700;
  color: #222;
}
.legend-select {
  display: flex;
  align-items: center;
  justify-content: space-between;
  box-sizing: border-box;
  height: 30px;
  margin-left: 6px;
  padding: 0 8px 0 4px;
  background: #fff;
  border: 1px solid #ccc;
}
.legend-select .chev {
  margin-bottom: 3px;
}
.legend-title {
  margin: 11px 0 1px;
  font-weight: 700;
  color: #222;
  line-height: 17px;
}
.legend-row {
  display: flex;
  align-items: center;
  gap: 4px;
  height: 22px;
  margin-left: 2px;
}
.swatch {
  width: 30px;
  height: 16px;
  box-sizing: border-box;
  border: 2px solid #555;
}

/* status bar */
.status {
  display: flex;
  align-items: center;
  box-sizing: border-box;
  width: 1920px;
  height: 32px;
  background: #eee;
  color: #333;
  white-space: nowrap;
}
.ready {
  margin-left: 3px;
}
.spacing {
  margin-left: auto;
  margin-right: 5px;
}
.seg {
  display: flex;
  align-items: center;
  box-sizing: border-box;
  height: 27px;
  border-left: 1px solid #888;
  flex: none;
}
.seg-fs {
  width: 226px;
  padding-left: 6px;
  gap: 6px;
}
.stat-ic {
  width: 16px;
  height: 16px;
}
.seg-view {
  width: 157px;
  padding-left: 5px;
}
.seg-tips {
  width: 177px;
  padding-left: 6px;
}
.tips-box {
  box-sizing: border-box;
  width: 60px;
  height: 19px;
  margin: 0 14px 0 19px;
  line-height: 19px;
  text-align: center;
  background: #d0d0d0;
}
.seg-tips .chev {
  margin-bottom: 3px;
}
.seg-xyz {
  width: 152px;
  justify-content: center;
}
</style>
